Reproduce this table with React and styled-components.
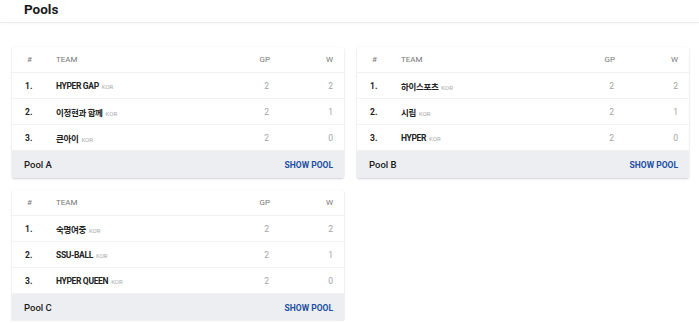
import React from "react";
import styled, { createGlobalStyle } from "styled-components";

const GlobalStyles = createGlobalStyle`
  body {
    margin: 0;
    background: #fff;
    font-family: Roboto, "Noto Sans CJK KR", "Liberation Sans", sans-serif;
    color: #222;
  }
`;

const TopBar = styled.header`
  height: 22px;
  border-bottom: 1px solid #ececec;
  box-shadow: 0 1px 2px rgba(0, 0, 0, 0.03);
  padding-left: 24px;
  display: flex;
  align-items: center;
`;

const Title = styled.h1`
  margin: 0;
  font-size: 13.5px;
  font-weight: 700;
  line-height: 1;
  color: #1a1a1a;
  transform: translateY(-1px);
`;

const Grid = styled.main`
  display: grid;
  grid-template-columns: 332px 332px;
  column-gap: 13px;
  row-gap: 12px;
  padding: 24px 12px 0 12px;
`;

const Card = styled.section`
  background: #fff;
  border-radius: 2px;
  box-shadow: 0 1px 2px rgba(0, 0, 0, 0.18), 0 0 1px rgba(0, 0, 0, 0.08);
  overflow: hidden;
`;

const Table = styled.table`
  width: 100%;
  border-collapse: collapse;
  table-layout: fixed;
`;

const Cell = styled.td`
  height: 25px;
  padding: 0;
  border-bottom: 1px solid #f2f2f2;
  font-size: ${(p) => (p.$muted ? 8.5 : 8.5)}px;
  letter-spacing: ${(p) => (p.$team ? "-0.35px" : "0")};
  text-align: ${(p) => p.$align || "left"};
  padding-left: ${(p) => p.$pl || 0}px;
  padding-right: ${(p) => p.$pr || 0}px;
  color: ${(p) => (p.$muted ? "#a3a3a3" : "#222")};
  font-weight: ${(p) => (p.$bold ? 700 : 400)};
  white-space: nowrap;
`;

const HeadCell = styled.th`
  height: 25px;
  padding: 0;
  border-bottom: 1px solid #f0f0f0;
  font-size: 8px;
  font-weight: 400;
  color: #777;
  text-align: ${(p) => p.$align || "left"};
  padding-left: ${(p) => p.$pl || 0}px;
  padding-right: ${(p) => p.$pr || 0}px;
`;

const Country = styled.span`
  font-size: 6px;
  font-weight: 400;
  letter-spacing: 0;
  color: #a8a8a8;
  margin-left: 3px;
`;

const Footer = styled.footer`
  height: 27px;
  background: #eceef1;
  display: flex;
  align-items: center;
  justify-content: space-between;
  padding: 0 11px 0 12px;
`;

const PoolName = styled.span`
  font-size: 9.5px;
  font-weight: 500;
  color: #1a1a1a;
`;

const ShowPool = styled.a`
  font-size: 8.5px;
  font-weight: 700;
  color: #1d4fa3;
  text-decoration: none;
`;

const pools = [
  {
    name: "Pool A",
    teams: [
      ["HYPER GAP", 2, 2],
      ["이정현과 함께", 2, 1],
      ["큰아이", 2, 0],
    ],
  },
  {
    name: "Pool B",
    teams: [
      ["하이스포츠", 2, 2],
      ["시립", 2, 1],
      ["HYPER", 2, 0],
    ],
  },
  {
    name: "Pool C",
    teams: [
      ["숙명여중", 2, 2],
      ["SSU-BALL", 2, 1],
      ["HYPER QUEEN", 2, 0],
    ],
  },
];

function PoolCard({ pool }) {
  return (
    <Card>
      <Table>
        <colgroup>
          <col style={{ width: 44 }} />
          <col />
          <col style={{ width: 60 }} />
          <col style={{ width: 74 }} />
        </colgroup>
        <thead>
          <tr>
            <HeadCell $pl={15}>#</HeadCell>
            <HeadCell>TEAM</HeadCell>
            <HeadCell $align="right">GP</HeadCell>
            <HeadCell $align="right" $pr={11}>W</HeadCell>
          </tr>
        </thead>
        <tbody>
          {pool.teams.map(([team, gp, w], i) => (
            <tr key={team}>
              <Cell $pl={13} $bold>{i + 1}.</Cell>
              <Cell $bold $team>
                {team}
                <Country>KOR</Country>
              </Cell>
              <Cell $align="right" $pr={1} $muted>{gp}</Cell>
              <Cell $align="right" $pr={11} $muted>{w}</Cell>
            </tr>
          ))}
        </tbody>
      </Table>
      <Footer>
        <PoolName>{pool.name}</PoolName>
        <ShowPool href="#">SHOW POOL</ShowPool>
      </Footer>
    </Card>
  );
}

export default function App() {
  return (
    <>
      <GlobalStyles />
      <TopBar>
        <Title>Pools</Title>
      </TopBar>
      <Grid>
        {pools.map((p) => (
          <PoolCard key={p.name} pool={p} />
        ))}
      </Grid>
    </>
  );
}
